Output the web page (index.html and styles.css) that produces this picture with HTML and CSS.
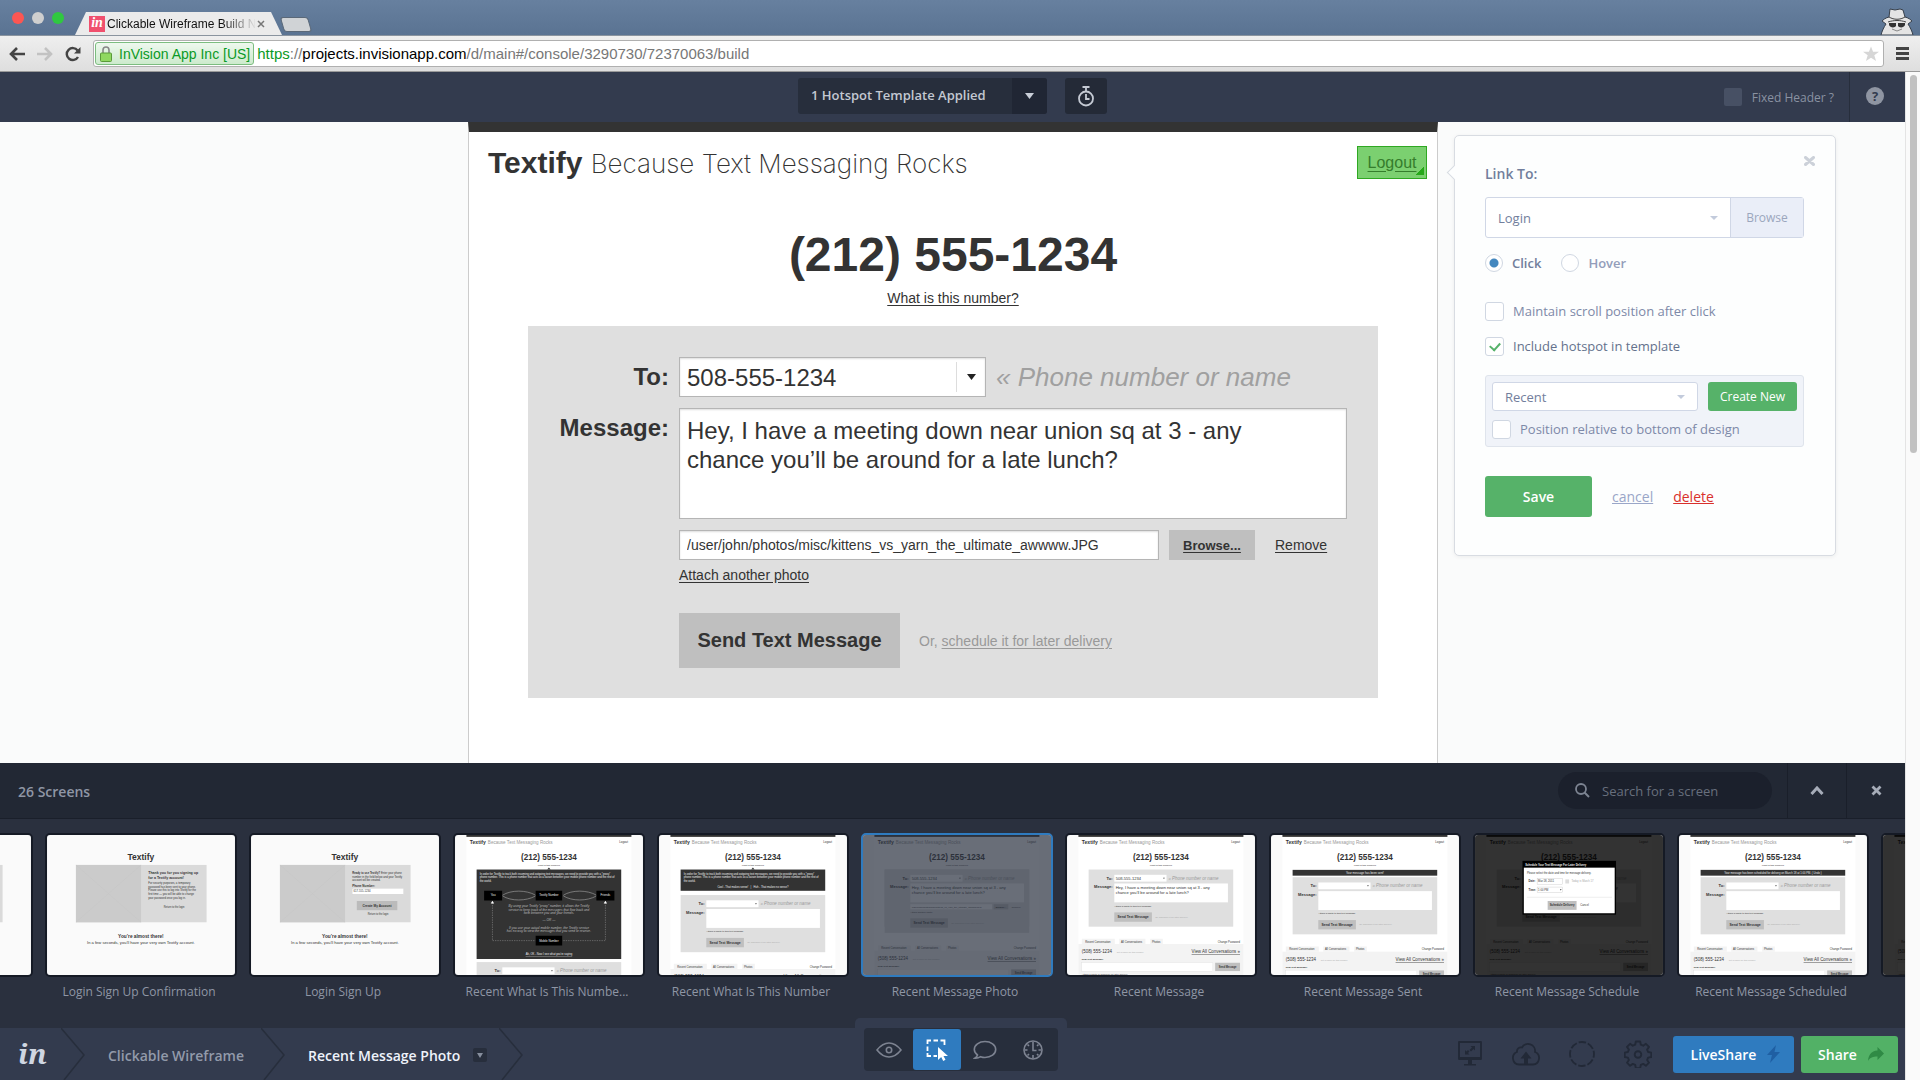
FILE: index.html
```html
<!DOCTYPE html>
<html lang="en">
<head>
  <meta charset="UTF-8" />
  <meta name="viewport" content="width=device-width, initial-scale=1" />
  <title>Clickable Wireframe Build</title>
  <link rel="stylesheet" href="styles.css">
</head>
<body>

  <!-- shared drawings for the screen thumbnails -->
  <svg class="defs" width="0" height="0" aria-hidden="true">
    <defs>
      <symbol id="t-top" viewBox="401 122 1105 823">
        <rect x="401" y="122" width="1105" height="823" fill="#fafafa"/>
        <rect x="468" y="122" width="970" height="823" fill="#fff"/>
        <rect x="468" y="122" width="970" height="11" fill="#333"/>
        <text x="488" y="174" class="t-b" font-size="30">Textify</text>
        <text x="594" y="174" class="t-l" font-size="27">Because Text Messaging Rocks</text>
        <text x="1418" y="168" class="t-r" font-size="17" text-anchor="end">Logout</text>
        <text x="953" y="271" class="t-b" font-size="48" text-anchor="middle">(212) 555-1234</text>
        <text x="953" y="303" class="t-r" font-size="14" text-anchor="middle">What is this number?</text>
      </symbol>
      <g id="t-fields">
        <rect x="528" y="325" width="850" height="336" fill="#dfdfdf"/>
        <text x="669" y="385" class="t-b" font-size="24" text-anchor="end">To:</text>
        <rect x="679" y="356" width="307" height="40" fill="#fff"/>
        <path d="M966 373h10l-5 7z" fill="#333"/>
        <text x="997" y="385" class="t-i" font-size="26">« Phone number or name</text>
        <text x="669" y="436" class="t-b" font-size="24" text-anchor="end">Message:</text>
        <rect x="679" y="407" width="668" height="111" fill="#fff"/>
      </g>
      <g id="t-send">
        <text x="679" y="544" class="t-r" font-size="14">Attach a photo to this text message</text>
        <rect x="679" y="577" width="221" height="55" fill="#bfbfbf"/>
        <text x="698" y="612" class="t-b" font-size="20">Send Text Message</text>
        <text x="919" y="609" class="t-g" font-size="14">Or, schedule it for later delivery</text>
      </g>
      <g id="t-filled">
        <text x="687" y="385" class="t-r" font-size="24">508-555-1234</text>
        <text x="687" y="438" class="t-r" font-size="24">Hey, I have a meeting down near union sq at 3 - any</text>
        <text x="687" y="466" class="t-r" font-size="24">chance you’ll be around for a late lunch?</text>
      </g>
      <g id="t-tabs">
        <path d="M488 732h194v31h-194zM708 732h154v31h-154zM890 732h74v31h-74z" fill="#f3f3f3"/>
        <rect x="468" y="763" width="970" height="260" fill="#f3f3f3"/>
        <text x="508" y="755" class="t-r" font-size="16">Recent Conversation</text>
        <text x="718" y="755" class="t-r" font-size="16">All Conversations</text>
        <text x="900" y="755" class="t-r" font-size="16">Photos</text>
        <text x="1418" y="755" class="t-r" font-size="16" text-anchor="end">Change Password</text>
        <text x="488" y="818" class="t-r" font-size="26">(508) 555-1234</text>
        <text x="694" y="816" class="t-g" font-size="13">Set a name for this number</text>
        <text x="1418" y="818" class="t-r" font-size="26" text-anchor="end" text-decoration="underline">View All Conversations »</text>
        <text x="488" y="858" class="t-b" font-size="14">New Text Message:</text>
        <rect x="488" y="873" width="770" height="49" fill="#fff" stroke="#ccc"/>
        <rect x="1272" y="873" width="146" height="49" fill="#bfbfbf"/>
        <text x="1345" y="903" class="t-b" font-size="15" text-anchor="middle">Send Message</text>
        <text x="488" y="944" class="t-r" font-size="14">Attach a photo or schedule for later delivery</text>
      </g>
      <g id="t-note">
        <path d="M943 325l10-12 10 12z" fill="#333"/>
        <text x="546" y="357" class="t-w" font-size="16">In order for Textify to track both incoming and outgoing text messages, we need to provide you with a “proxy”</text>
        <text x="546" y="377" class="t-w" font-size="16">phone number. This is a phone number that acts as a liaison between your mobile phone number and the rest of</text>
        <text x="546" y="397" class="t-w" font-size="16">the world.</text>
      </g>
      <symbol id="t-login" viewBox="0 0 1105 823">
        <rect width="1105" height="823" fill="#fafafa"/>
        <text x="552" y="147" class="t-b" font-size="50" text-anchor="middle">Textify</text>
        <rect x="170" y="176" width="768" height="337" fill="#dadada"/>
        <rect x="170" y="176" width="383" height="337" fill="#cbcbcb"/>
        <path d="M170 176l383 337M553 176l-383 337" stroke="#c5c5c5" stroke-width="3"/>
        <text x="552" y="605" class="t-b" font-size="28" text-anchor="middle">You’re almost there!</text>
        <text x="552" y="643" class="t-r" font-size="24" text-anchor="middle">In a few seconds, you’ll have your very own Textify account.</text>
      </symbol>
    </defs>
  </svg>

  <div class="titlebar">
    <div class="lights"><span class="red"></span><span class="grey"></span><span class="green"></span></div>
    <div class="tab">
      <span class="favicon">in</span>
      <span class="tab-title">Clickable Wireframe Build N</span>
      <button class="tab-close" aria-label="Close tab"><svg width="8" height="8" viewBox="0 0 8 8"><path d="M1 1l6 6M7 1L1 7" stroke="#777" stroke-width="1.5"/></svg></button>
    </div>
    <span class="new-tab"></span>
    <svg class="incognito" width="34" height="28" viewBox="0 0 34 28">
      <path d="M10 2l5 1 5-1 3 1 2 7c4 1 6 3 7 4l-4 3c2 3 4 7 5 11H1c1-4 3-8 5-11l-4-3c1-1 3-3 7-4z" fill="#e4e4e4" stroke="#37404c"/>
      <path d="M9 10c5 3 11 3 16 0M8 15c6-2 12-2 18 0" stroke="#444" fill="none"/>
      <path d="M9 16h7v3c-1 2-6 2-7-1zM18 16h7v2c-1 3-6 3-7 1z" fill="#333"/>
      <path d="M12 22l5 2 5-2" stroke="#888" fill="none"/>
    </svg>
  </div>

  <div class="toolbar">
    <button class="nav" aria-label="Back"><svg width="16" height="14" viewBox="0 0 16 14"><path d="M8 1L2 7l6 6M2 7h14" fill="none" stroke="#444" stroke-width="2.6"/></svg></button>
    <button class="nav" aria-label="Forward"><svg width="16" height="14" viewBox="0 0 16 14"><path d="M8 1l6 6-6 6M14 7H0" fill="none" stroke="#c2c2c2" stroke-width="2.6"/></svg></button>
    <button class="nav" aria-label="Reload"><svg width="16" height="16" viewBox="0 0 16 16"><path d="M13 11a6 6 0 1 1-.4-6.5" fill="none" stroke="#444" stroke-width="2.4"/><path d="M15.500 1v6.500H9z" fill="#444"/></svg></button>
    <div class="omnibox">
      <span class="cert">
        <svg width="12" height="16" viewBox="0 0 12 16"><path d="M3 8V4a3 3 0 0 1 6 0v4" fill="none" stroke="#888" stroke-width="1.6"/><rect x=".5" y="7" width="11" height="8.500" rx="1" fill="#8fd860" stroke="#5a9a3a"/></svg>
        InVision App Inc [US]
      </span>
      <span class="url"><span class="scheme">https</span>://<b>projects.invisionapp.com</b>/d/main#/console/3290730/72370063/build</span>
      <svg class="star" width="16" height="16" viewBox="0 0 18 17"><path d="M9 0l2.300 6H18l-5.300 4 2 6.500L9 12.600 3.300 16.500l2-6.500L0 6h6.700z" fill="#d6d6d6"/></svg>
    </div>
    <button class="menu" aria-label="Menu"><svg width="14" height="13" viewBox="0 0 14 13"><path d="M0 1.500h13M0 6.500h13M0 11.500h13" stroke="#444" stroke-width="3"/></svg></button>
  </div>

  <div class="viewport">
    <div class="app">

      <header class="app-header">
        <div class="header-side"></div>
        <div class="header-center">
          <button class="template">
            <span class="template-name">1 Hotspot Template Applied</span>
            <span class="template-arrow"><svg width="9" height="6" viewBox="0 0 9 6"><path d="M0 0h9L4.500 6z" fill="#c9ced8"/></svg></span>
          </button>
          <button class="timer" aria-label="Timer">
            <svg width="18" height="21" viewBox="0 0 18 21"><g fill="none" stroke="#c5cad4" stroke-width="1.8"><circle cx="9" cy="12.500" r="7"/><path d="M5.500 1h7M9 1v4M9 8v5h3.500"/></g></svg>
          </button>
        </div>
        <div class="header-side header-right">
          <label class="fixed"><input type="checkbox"> Fixed Header ?</label>
          <button class="help" aria-label="Help"><span>?</span></button>
        </div>
      </header>

      <main class="canvas">
        <section class="mock">
          <div class="mock-brand">
            <h1>Textify <span>Because Text Messaging Rocks</span></h1>
            <a class="logout" href="#">Logout</a>
          </div>
          <h2>(212) 555-1234</h2>
          <a class="what" href="#">What is this number?</a>

          <form class="message-form">
            <label class="form-label" for="to">To:</label>
            <div class="to-row">
              <div class="combo">
                <input type="text" id="to" value="508-555-1234">
                <span class="combo-arrow"><svg width="9" height="6" viewBox="0 0 9 6"><path d="M0 0h9L4.500 6z" fill="#222"/></svg></span>
              </div>
              <em>« Phone number or name</em>
            </div>
            <label class="form-label" for="message">Message:</label>
            <div class="message-col">
              <textarea id="message">Hey, I have a meeting down near union sq at 3 - any
chance you’ll be around for a late lunch?</textarea>
              <div class="file-row">
                <input type="text" aria-label="Photo path" value="/user/john/photos/misc/kittens_vs_yarn_the_ultimate_awwww.JPG">
                <button type="button" class="browse-file">Browse...</button>
                <a href="#">Remove</a>
              </div>
              <a class="attach" href="#">Attach another photo</a>
              <div class="send-row">
                <button type="button" class="send">Send Text Message</button>
                <span>Or, <a href="#">schedule it for later delivery</a></span>
              </div>
            </div>
          </form>
        </section>

        <aside class="panel">
          <button class="panel-close" aria-label="Close"><svg width="11" height="10" viewBox="0 0 11 10"><path d="M1.500 1.500l8 7M9.500 1.500l-8 7" stroke="#ccd1d9" stroke-width="3" stroke-linecap="round"/></svg></button>
          <label class="panel-title" for="link">Link To:</label>
          <div class="link-row">
            <span class="select"><select id="link"><option>Login</option></select></span>
            <button class="browse">Browse</button>
          </div>
          <div class="radios">
            <label class="on"><input type="radio" name="trigger" checked> Click</label>
            <label><input type="radio" name="trigger"> Hover</label>
          </div>
          <label class="check"><input type="checkbox"> Maintain scroll position after click</label>
          <label class="check on"><input type="checkbox" checked> Include hotspot in template</label>
          <div class="template-box">
            <div class="template-row">
              <span class="select"><select aria-label="Template"><option>Recent</option></select></span>
              <button class="create">Create New</button>
            </div>
            <label class="check"><input type="checkbox"> Position relative to bottom of design</label>
          </div>
          <div class="actions">
            <button class="save">Save</button>
            <a class="cancel" href="#">cancel</a>
            <a class="delete" href="#">delete</a>
          </div>
        </aside>
      </main>

      <section class="drawer">
        <div class="drawer-head">
          <h3>26 Screens</h3>
          <label class="search">
            <svg width="15" height="15" viewBox="0 0 15 15"><circle cx="6" cy="6" r="5" fill="none" stroke="#7d8492" stroke-width="1.8"/><path d="M9.500 9.500l4.500 4.500" stroke="#7d8492" stroke-width="2"/></svg>
            <input type="text" placeholder="Search for a screen" aria-label="Search for a screen">
          </label>
          <button class="head-btn" aria-label="Expand"><svg width="14" height="9" viewBox="0 0 14 9"><path d="M1.500 8L7 2l5.500 6" fill="none" stroke="#a6acb8" stroke-width="3"/></svg></button>
          <button class="head-btn" aria-label="Close drawer"><svg width="11" height="11" viewBox="0 0 11 11"><path d="M1.500 1.500l8 8M9.500 1.500l-8 8" stroke="#a6acb8" stroke-width="2.800"/></svg></button>
        </div>

        <div class="strip">
          <figure class="card">
            <svg viewBox="0 0 1105 823"><use href="#t-login"/></svg>
            <figcaption></figcaption>
          </figure>
          <figure class="card">
            <svg viewBox="0 0 1105 823">
              <use href="#t-login"/>
              <text x="595" y="230" class="t-b" font-size="21">Thank you for you signing up</text>
              <text x="595" y="257" class="t-b" font-size="21">for a Textify account!</text>
              <text x="595" y="290" class="t-r" font-size="16">For security purposes, a temporary</text>
              <text x="595" y="311" class="t-r" font-size="16">password has been sent to your phone.</text>
              <text x="595" y="332" class="t-r" font-size="16">Please use this to log into Textify for the</text>
              <text x="595" y="353" class="t-r" font-size="16">first time — you will be able to change</text>
              <text x="595" y="374" class="t-r" font-size="16">your password once you log in.</text>
              <text x="747" y="427" class="t-r" font-size="15" text-anchor="middle">Return to the login</text>
            </svg>
            <figcaption>Login Sign Up Confirmation</figcaption>
          </figure>
          <figure class="card">
            <svg viewBox="0 0 1105 823">
              <use href="#t-login"/>
              <text x="595" y="230" class="t-r" font-size="16"><tspan font-weight="bold">Ready to use Textify?</tspan> Enter your phone</text>
              <text x="595" y="250" class="t-r" font-size="16">number in the field below and your Textify</text>
              <text x="595" y="270" class="t-r" font-size="16">account will be created.</text>
              <text x="595" y="303" class="t-b" font-size="18">Phone Number:</text>
              <rect x="595" y="314" width="302" height="34" fill="#fff" stroke="#bbb"/>
              <text x="603" y="337" class="t-r" font-size="16">617-555-1234</text>
              <rect x="622" y="388" width="238" height="54" fill="#bbb"/>
              <text x="741" y="422" class="t-b" font-size="19" text-anchor="middle">Create My Account</text>
              <text x="747" y="470" class="t-r" font-size="15" text-anchor="middle">Return to the login</text>
            </svg>
            <figcaption>Login Sign Up</figcaption>
          </figure>
          <figure class="card">
            <svg viewBox="401 122 1105 823">
              <use href="#t-top" x="401" y="122" width="1105" height="823"/>
              <rect x="528" y="325" width="850" height="526" fill="#333"/>
              <use href="#t-note"/>
              <g fill="none" stroke="#999" stroke-width="4">
                <path d="M680 476c50-32 140-32 195 0M680 480c50 32 140 32 195 0M1038 476c50-32 140-32 195 0M1038 480c50 32 140 32 195 0"/>
                <path d="M621 520v223h254M1285 520v223h-254" stroke-width="3" stroke-dasharray="8 6"/>
              </g>
              <path d="M611 524l10-16 10 16zM1275 524l10-16 10 16z" fill="#fff"/>
              <path d="M572 449h106v58h-106zM875 449h156v58h-156zM1232 449h106v58h-106zM875 714h156v58h-156z"/>
              <text x="625" y="483" class="t-w" font-size="17" text-anchor="middle">You</text>
              <text x="953" y="483" class="t-w" font-size="17" text-anchor="middle">Textify Number</text>
              <text x="1285" y="483" class="t-w" font-size="17" text-anchor="middle">Friends</text>
              <text x="953" y="749" class="t-w" font-size="17" text-anchor="middle">Mobile Number</text>
              <g class="t-wi" font-size="19" text-anchor="middle">
                <text x="953" y="548">By using your Textify “proxy” number, it allows the Textify</text>
                <text x="953" y="568">service to keep track of the messages that flow back and</text>
                <text x="953" y="588">forth between you and your friends.</text>
                <text x="953" y="630">— OR —</text>
                <text x="953" y="674">If you use your actual mobile number, the Textify service</text>
                <text x="953" y="694">has no way to view the messages that you send or receive.</text>
              </g>
              <text x="953" y="828" class="t-w" font-size="16" text-anchor="middle" text-decoration="underline">Ah, OK - Now I see what you’re saying</text>
              <use href="#t-fields" y="544"/>
            </svg>
            <figcaption>Recent What Is This Numbe...</figcaption>
          </figure>
          <figure class="card">
            <svg viewBox="401 122 1105 823">
              <use href="#t-top" x="401" y="122" width="1105" height="823"/>
              <rect x="528" y="325" width="850" height="125" fill="#333"/>
              <use href="#t-note"/>
              <text x="953" y="432" class="t-w" font-size="16" text-anchor="middle">Cool - That makes sense!  &#160; | &#160;  Huh - That makes no sense?</text>
              <use href="#t-fields" y="150"/>
              <use href="#t-send" y="150"/>
              <use href="#t-tabs" y="147"/>
            </svg>
            <figcaption>Recent What Is This Number</figcaption>
          </figure>
          <figure class="card selected">
            <svg viewBox="401 122 1105 823">
              <use href="#t-top" x="401" y="122" width="1105" height="823"/>
              <rect x="528" y="325" width="850" height="372" fill="#dfdfdf"/>
              <use href="#t-fields"/>
              <use href="#t-filled"/>
              <rect x="679" y="529" width="480" height="30" fill="#fff"/>
              <text x="687" y="549" class="t-r" font-size="14">/user/john/photos/misc/kittens_vs_yarn_the_ultimate_awwww.JPG</text>
              <rect x="1169" y="529" width="86" height="30" fill="#bfbfbf"/>
              <text x="1212" y="549" class="t-b" font-size="14" text-anchor="middle">Browse...</text>
              <text x="1275" y="549" class="t-r" font-size="14">Remove</text>
              <text x="679" y="579" class="t-r" font-size="14">Attach another photo</text>
              <rect x="679" y="612" width="221" height="55" fill="#bfbfbf"/>
              <text x="698" y="647" class="t-b" font-size="20">Send Text Message</text>
              <text x="919" y="644" class="t-g" font-size="14">Or, schedule it for later delivery</text>
              <use href="#t-tabs" y="39"/>
              <rect x="401" y="122" width="1105" height="823" fill="#2a303e" opacity=".7"/>
            </svg>
            <figcaption>Recent Message Photo</figcaption>
          </figure>
          <figure class="card">
            <svg viewBox="401 122 1105 823">
              <use href="#t-top" x="401" y="122" width="1105" height="823"/>
              <use href="#t-fields"/><use href="#t-filled"/><use href="#t-send"/><use href="#t-tabs"/>
            </svg>
            <figcaption>Recent Message</figcaption>
          </figure>
          <figure class="card">
            <svg viewBox="401 122 1105 823">
              <use href="#t-top" x="401" y="122" width="1105" height="823"/>
              <rect x="528" y="327" width="850" height="34" fill="#333"/>
              <text x="953" y="350" class="t-w" font-size="17" text-anchor="middle">Your message has been sent!</text>
              <use href="#t-fields" y="45"/><use href="#t-send" y="45"/><use href="#t-tabs" y="45"/>
            </svg>
            <figcaption>Recent Message Sent</figcaption>
          </figure>
          <figure class="card">
            <svg viewBox="401 122 1105 823">
              <use href="#t-top" x="401" y="122" width="1105" height="823"/>
              <use href="#t-fields"/><use href="#t-filled"/><use href="#t-send"/><use href="#t-tabs"/>
              <rect x="401" y="122" width="1105" height="823" opacity=".8"/>
              <rect x="680" y="274" width="550" height="316"/>
              <rect x="688" y="314" width="534" height="268" fill="#fff"/>
              <text x="696" y="302" class="t-w" font-size="16" font-weight="bold">Schedule Your Text Message For Later Delivery</text>
              <text x="706" y="350" class="t-r" font-size="16">Please select the date and time for message delivery.</text>
              <text x="716" y="400" class="t-b" font-size="16">Date:</text>
              <rect x="766" y="379" width="150" height="32" fill="#fff" stroke="#bbb" stroke-width="2"/>
              <text x="772" y="401" class="t-r" font-size="16">Mar 18, 2011</text>
              <rect x="932" y="383" width="22" height="24" fill="#ddd"/>
              <text x="968" y="401" class="t-g" font-size="16">Today is March 17</text>
              <text x="716" y="449" class="t-b" font-size="16">Time:</text>
              <rect x="766" y="428" width="150" height="32" fill="#fff" stroke="#bbb" stroke-width="2"/>
              <text x="772" y="450" class="t-r" font-size="16">1:00 PM</text>
              <path d="M900 441h10l-5 7z" fill="#333"/>
              <path d="M706 488h500" stroke="#ddd" stroke-width="3"/>
              <rect x="828" y="510" width="170" height="52" fill="#bfbfbf"/>
              <text x="913" y="542" class="t-b" font-size="17" text-anchor="middle">Schedule Delivery</text>
              <text x="1020" y="542" class="t-r" font-size="16">Cancel</text>
            </svg>
            <figcaption>Recent Message Schedule</figcaption>
          </figure>
          <figure class="card">
            <svg viewBox="401 122 1105 823">
              <use href="#t-top" x="401" y="122" width="1105" height="823"/>
              <rect x="528" y="327" width="850" height="34" fill="#333"/>
              <text x="953" y="350" class="t-w" font-size="16" text-anchor="middle">Your message has been scheduled for delivery on March 18 at 1:00 PM. ( Undo )</text>
              <use href="#t-fields" y="45"/><use href="#t-send" y="45"/><use href="#t-tabs" y="45"/>
            </svg>
            <figcaption>Recent Message Scheduled</figcaption>
          </figure>
          <figure class="card">
            <svg viewBox="401 122 1105 823">
              <use href="#t-top" x="401" y="122" width="1105" height="823"/>
              <use href="#t-fields"/><use href="#t-send"/><use href="#t-tabs"/>
              <rect x="401" y="122" width="1105" height="823" opacity=".8"/>
            </svg>
            <figcaption></figcaption>
          </figure>
        </div>
      </section>

      <footer class="app-footer">
        <nav class="crumbs">
          <a class="logo" href="#">in</a>
          <svg class="chev" width="24" height="52" viewBox="0 0 24 52"><path d="M0 0l23 27-20 25" fill="none" stroke="#272e3c" stroke-width="1.500"/></svg>
          <a class="crumb" href="#">Clickable Wireframe</a>
          <svg class="chev" width="24" height="52" viewBox="0 0 24 52"><path d="M0 0l23 27-20 25" fill="none" stroke="#272e3c" stroke-width="1.500"/></svg>
          <a class="crumb current" href="#">Recent Message Photo</a>
          <button class="crumb-menu" aria-label="Screens"><svg width="6" height="5" viewBox="0 0 6 5"><path d="M0 0h6L3 5z" fill="#868e9d"/></svg></button>
          <svg class="chev" width="24" height="52" viewBox="0 0 24 52"><path d="M0 0l23 27-20 25" fill="none" stroke="#272e3c" stroke-width="1.500"/></svg>
        </nav>

        <div class="modes">
          <div class="modes-inner">
            <button aria-label="Preview"><svg width="26" height="18" viewBox="0 0 26 18"><g fill="none" stroke="#7d8391" stroke-width="1.600"><path d="M1 9c4-5 8-7 12-7s8 2 12 7c-4 5-8 7-12 7S5 14 1 9z"/><circle cx="13" cy="9" r="2.700"/></g></svg></button>
            <button class="active" aria-label="Build"><svg width="22" height="22" viewBox="0 0 22 22"><path d="M1.500 5V1.500H5M7.500 1.500h4.500M14.500 1.500h4V6M1.500 7.500V12M1.500 14v3H5M7.500 17H11" fill="none" stroke="#fff" stroke-width="1.800"/><path d="M12 8v13l3.200-3 2 4 2.300-1.200-2-3.800H22z" fill="#fff"/></svg></button>
            <button aria-label="Comment"><svg width="24" height="20" viewBox="0 0 24 20"><path d="M4.500 15C2.500 13.500 1.300 11.500 1.300 9.500c0-4.500 4.800-8 10.700-8s10.700 3.500 10.700 8-4.800 8-10.700 8c-1.600 0-3-.3-4.400-.8C6 17.800 4 18.400 1.800 18.200 3.300 17.300 4.200 16.300 4.500 15z" fill="none" stroke="#7d8391" stroke-width="1.600"/></svg></button>
            <button aria-label="History"><svg width="20" height="20" viewBox="0 0 20 20"><g fill="none" stroke="#7d8391" stroke-width="1.600"><circle cx="10" cy="10" r="9"/><path d="M10 2v8.500h3.500M10 15v3.500M2 10h2.500M15.500 10H18M4.500 4.500L6 6M15.500 4.500L14 6M4.500 15.500L6 14M15.500 15.500L14 14"/></g></svg></button>
          </div>
        </div>

        <div class="tools">
          <button aria-label="Present"><svg width="24" height="26" viewBox="0 0 24 26"><path d="M1 1h22v17H1z" fill="none" stroke="#222937" stroke-width="1.800" stroke-linejoin="round"/><path d="M1 16h22v3H1zM10 19h4v4h4v1.500H6V23h4zM12.500 5H17v4.500l-1.500-1.500-2.500 2.500-1.500-1.500L14 6.500zM11.500 13.500H7V9l1.500 1.500L10 9l1.500 1.500-1.500 1.500z" fill="#222937"/></svg></button>
          <button aria-label="Upload"><svg width="30" height="26" viewBox="0 0 30 26"><path d="M8 23.500a6.500 6.500 0 0 1-2-12.500 4 4 0 0 1 5-4.500 7 7 0 0 1 13 4.500A6.500 6.500 0 0 1 22 23.500z" fill="none" stroke="#222937" stroke-width="1.800"/><path d="M15 10.500l5.500 7H17v6h-4v-6H9.500z" fill="#222937"/></svg></button>
          <button aria-label="Status"><svg width="26" height="26" viewBox="0 0 26 26"><circle cx="13" cy="13" r="12" fill="none" stroke="#222937" stroke-width="1.800" stroke-dasharray="7.400 2.020" stroke-dashoffset="3.700"/></svg></button>
          <button aria-label="Settings"><svg width="28" height="28" viewBox="0 0 28 28"><g fill="none" stroke="#222937" stroke-width="1.900" stroke-linejoin="round"><path d="M11.800 1.500h4.400l.6 3.200 2.400 1 2.700-1.900 3.100 3.100-1.900 2.700 1 2.400 3.200.6v4.400l-3.200.6-1 2.400 1.900 2.700-3.100 3.100-2.700-1.900-2.400 1-.6 3.200h-4.400l-.6-3.200-2.400-1-2.700 1.900L3 22.700 4.900 20l-1-2.400-3.200-.6v-4.400l3.200-.6 1-2.400L3 6.900l3.100-3.100 2.700 1.900 2.400-1z"/><circle cx="14" cy="14.500" r="3.300"/></g></svg></button>
          <button class="liveshare">LiveShare <svg width="13" height="18" viewBox="0 0 13 18"><path d="M9 0L0 10h5L3 18l10-11H7.500z" fill="#1f5fa3"/></svg></button>
          <button class="share">Share <svg width="16" height="14" viewBox="0 0 16 14"><path d="M16 6.500L9.500 0v3.500C3 4 .5 8 0 14c2-3.500 5-4.500 9.500-4.500V13z" fill="#2f8a45"/></svg></button>
        </div>
      </footer>
    </div>
    <div class="scrollbar"><span></span></div>
  </div>
</body>
</html>
```

FILE: styles.css
```css
* {
  box-sizing: border-box;
}

body {
  margin: 0;
  height: 100vh;
  display: flex;
  flex-direction: column;
  overflow: hidden;
  font-family: "Open Sans", "Noto Sans", sans-serif;
  font-size: 13px;
  background: #fafafa;
}

button {
  border: none;
  padding: 0;
  background: none;
  font-family: inherit;
  cursor: pointer;
  display: flex;
  align-items: center;
  justify-content: center;
}

h1, h2, h3, figure {
  margin: 0;
}

a {
  color: inherit;
}

.defs {
  position: absolute;
}

/* browser window */
.titlebar {
  display: flex;
  align-items: flex-end;
  height: 36px;
  flex: none;
  padding: 0 6px 0 12px;
  background: linear-gradient(#67809f, #5a7392);
  border-bottom: 1px solid #8a949f;
}

.lights {
  display: flex;
  gap: 8px;
  align-self: center;
  margin-right: 11px;
}

.lights span {
  width: 12px;
  height: 12px;
  border-radius: 50%;
}

.lights .red {
  background: #fc5652;
}

.lights .grey {
  background: #cfcfcf;
}

.lights .green {
  background: #30c840;
}

.tab {
  display: flex;
  align-items: center;
  width: 207px;
  height: 23px;
  padding: 0 15px 0 14px;
  background: #ebebeb;
  clip-path: polygon(11px 0, calc(100% - 11px) 0, 100% 100%, 0 100%);
  font-family: "Liberation Sans", Arial, sans-serif;
}

.favicon {
  width: 16px;
  height: 16px;
  text-align: center;
  background: #f0506e;
  color: #fff;
  font: italic bold 14px/14px "Liberation Serif", serif;
  margin-right: 2px;
}

.tab-title {
  flex: 1;
  min-width: 0;
  font-size: 12px;
  white-space: nowrap;
  color: #111;
  mask-image: linear-gradient(to right, #000 115px, transparent 150px);
}

.tab-close {
  width: 12px;
}

.new-tab {
  width: 28px;
  height: 15px;
  margin: 0 0 3px 0;
  background: #d0d3d6;
  border: 1px solid #5a6878;
  border-radius: 3px;
  transform: skewX(16deg);
}

.incognito {
  margin-left: auto;
}

.toolbar {
  display: flex;
  align-items: center;
  height: 36px;
  flex: none;
  padding: 0 10px 0 9px;
  background: linear-gradient(#efefef, #dedede);
  border-bottom: 1px solid #9a9a9a;
}

.nav {
  width: 16px;
  margin-right: 12px;
}

.omnibox {
  flex: 1;
  display: flex;
  align-items: center;
  height: 27px;
  padding: 0 4px 0 1px;
  margin-right: 12px;
  background: #fff;
  border: 1px solid #b0b0b0;
  border-radius: 3px;
  font: 14px "Liberation Sans", Arial, sans-serif;
}

.cert {
  display: flex;
  align-items: center;
  gap: 7px;
  height: 23px;
  padding: 0 3px 0 4px;
  margin-right: 3px;
  border: 1px solid #7cbd80;
  border-radius: 3px;
  background: linear-gradient(#eef8ee, #cdeacd);
  color: #0b9a26;
}

.url {
  color: #777;
  font-size: 15px;
}

.url .scheme {
  color: #0b9a26;
}

.url b {
  color: #000;
  font-weight: normal;
}

.star {
  margin-left: auto;
}

.viewport {
  flex: 1;
  min-height: 0;
  display: flex;
}

.app {
  flex: 1;
  min-width: 0;
  display: flex;
  flex-direction: column;
}

.scrollbar {
  width: 15px;
  padding: 3px 3px 0 4px;
  background: #fafafa;
  border-left: 1px solid #e4e4e4;
}

.scrollbar span {
  display: block;
  height: 378px;
  border-radius: 4px;
  background: #c1c1c1;
}

/* top bar */
.app-header {
  display: flex;
  height: 50px;
  flex: none;
  background: #333b4e;
}

.header-side {
  flex: 1;
  display: flex;
  justify-content: flex-end;
}

.header-center {
  display: flex;
  align-items: center;
  gap: 18px;
  padding-bottom: 2px;
}

.template {
  height: 36px;
  border-radius: 3px;
  overflow: hidden;
  background: #272e3c;
  color: #c3c8d2;
  font-size: 13px;
  font-weight: 600;
}

.template-name {
  width: 214px;
  padding: 0 0 2px 13px;
  text-align: left;
}

.template-arrow {
  display: flex;
  align-items: center;
  justify-content: center;
  width: 35px;
  height: 36px;
  background: #202634;
}

.timer {
  width: 42px;
  height: 36px;
  border-radius: 3px;
  background: #242a37;
}

.fixed {
  display: flex;
  align-items: center;
  gap: 10px;
  padding-right: 15px;
  color: #8a92a2;
  font-size: 12px;
}

.fixed input {
  appearance: none;
  width: 18px;
  height: 18px;
  margin: 0;
  border-radius: 2px;
  background: #475064;
}

.help {
  width: 56px;
  border-left: 1px solid #272e3c;
}

.help span {
  width: 18px;
  height: 18px;
  margin: 0 5px 2px 0;
  border-radius: 50%;
  background: #8f95a2;
  color: #333b4e;
  font-size: 13px;
  font-weight: bold;
  line-height: 18px;
}

/* wireframe */
.canvas {
  flex: 1;
  min-height: 0;
  overflow: hidden;
  display: grid;
  grid-template-columns: 1fr 970px 1fr;
  padding-left: 1px;
  background: #fafbfb;
}

.mock {
  grid-column: 2;
  background: #fff;
  border: 1px solid #ccc;
  border-top: 10px solid #333;
  border-bottom: none;
  font-family: "Liberation Sans", Arial, sans-serif;
  color: #333;
  text-align: center;
}

.mock-brand {
  display: flex;
  justify-content: space-between;
  align-items: center;
  padding: 13px 10px 0 19px;
}

.mock-brand h1 {
  padding-top: 3px;
  font-size: 30px;
  line-height: 30px;
}

.mock-brand h1 span {
  font-family: Inter, "Liberation Sans", sans-serif;
  font-weight: 200;
  font-size: 26px;
}

.logout {
  width: 70px;
  height: 33px;
  line-height: 32px;
  border: 1px solid #2fa822;
  background: linear-gradient(135deg, transparent 50%, #26a81a 50%) right 2px bottom 3px / 8px 8px no-repeat #7bd070;
  color: #357d2c;
  font-size: 16px;
  text-underline-offset: 3px;
}

.mock h2 {
  margin-top: 48px;
  font-size: 48px;
  line-height: 56px;
}

.what {
  display: block;
  margin-top: 5px;
  font-size: 14px;
  line-height: 20px;
  text-underline-offset: 2px;
}

.message-form {
  display: grid;
  grid-template-columns: 141px 1fr;
  gap: 11px 10px;
  margin: 18px 59px 0;
  padding: 31px 31px 30px 0;
  background: #dfdfdf;
  text-align: left;
  font-size: 14px;
}

.message-form input,
.message-form textarea {
  display: block;
  border: 1px solid #b5b5b5;
  border-radius: 0;
  background: #fff;
  box-shadow: inset 0 1px 2px #ddd;
  color: #333;
  font-family: inherit;
  font-size: 24px;
  line-height: 29px;
  padding: 7px 7px 6px;
}

.form-label {
  text-align: right;
  font-size: 24px;
  font-weight: bold;
  line-height: 40px;
}

.to-row {
  display: flex;
  align-items: center;
  gap: 10px;
}

.to-row em {
  color: #a0a0a0;
  font-size: 26px;
}

.combo {
  position: relative;
  width: 307px;
}

.combo input {
  width: 100%;
  height: 40px;
}

.combo-arrow {
  position: absolute;
  top: 5px;
  right: 1px;
  width: 29px;
  height: 30px;
  display: flex;
  align-items: center;
  justify-content: center;
  border-left: 1px solid #ddd;
}

.message-form textarea {
  width: 100%;
  height: 111px;
  resize: none;
  overflow: hidden;
}

.file-row {
  display: flex;
  align-items: center;
  margin-top: 11px;
}

.file-row input {
  width: 480px;
  height: 30px;
  padding: 0 7px;
  font-size: 14px;
}

.browse-file {
  width: 86px;
  height: 30px;
  margin: 0 20px 0 10px;
  background: #bfbfbf;
  color: #333;
  font-size: 13px;
  font-weight: bold;
  text-decoration: underline;
  text-underline-offset: 2px;
}

.message-form a {
  text-underline-offset: 2px;
}

.attach {
  display: block;
  margin-top: 5px;
  line-height: 20px;
}

.send-row {
  display: flex;
  align-items: center;
  gap: 19px;
  margin-top: 28px;
  color: #999;
}

.send {
  width: 221px;
  height: 55px;
  background: #bfbfbf;
  color: #333;
  font-size: 20px;
  font-weight: bold;
}

/* hotspot panel */
.panel {
  position: relative;
  width: 382px;
  height: 421px;
  margin: 13px 0 0 16px;
  padding: 28px 31px 0 30px;
  background: #fdfefe;
  border: 1px solid #d8dce2;
  border-radius: 5px;
  box-shadow: 0 1px 4px rgba(0, 0, 0, 0.06);
  color: #7d89a8;
}

.panel::before {
  content: "";
  position: absolute;
  left: -6px;
  top: 31px;
  width: 10px;
  height: 10px;
  background: #fdfefe;
  border: 1px solid #d8dce2;
  border-width: 0 0 1px 1px;
  transform: rotate(45deg);
}

.panel-close {
  position: absolute;
  top: 20px;
  right: 20px;
}

.panel-title {
  display: block;
  font-size: 14px;
  font-weight: 600;
  line-height: 20px;
  color: #727e9c;
}

.link-row {
  display: flex;
  height: 41px;
  margin-top: 13px;
  border: 1px solid #d0d7e6;
  border-radius: 3px;
  background: #fff;
}

.select {
  position: relative;
  flex: 1;
  display: flex;
}

.select::after {
  content: "";
  position: absolute;
  right: 12px;
  top: 50%;
  margin-top: -2px;
  border: 4px solid transparent;
  border-top-color: #c3cbdc;
  border-bottom: none;
}

.select select {
  appearance: none;
  width: 100%;
  padding: 0 12px;
  border: none;
  background: none;
  color: #727e9c;
  font: 13px "Open Sans", sans-serif;
}

.browse {
  width: 73px;
  border-left: 1px solid #d0d7e6;
  background: #eaeef8;
  color: #9ba6bd;
  font-size: 12px;
}

.radios {
  display: flex;
  gap: 20px;
  margin: 15px 0 29px;
  font-weight: 600;
  line-height: 20px;
  color: #939dba;
}

.radios label,
.check {
  display: flex;
  align-items: center;
  gap: 9px;
}

.radios .on {
  color: #727e9c;
}

.panel input {
  appearance: none;
  width: 18px;
  height: 18px;
  margin: 0;
  border: 1px solid #d0d7e2;
  border-radius: 50%;
  background: #fff;
}

.panel input[type="radio"]:checked {
  background: radial-gradient(circle, #4488bf 4px, #fff 5px);
}

.check {
  margin-bottom: 16px;
  line-height: 19px;
}

.check.on {
  color: #64728c;
}

.panel .check input {
  width: 19px;
  height: 19px;
  border-radius: 3px;
  display: grid;
  place-items: center;
}

.panel .check input:checked::before {
  content: "";
  width: 8px;
  height: 5px;
  border: 2px solid #56b26a;
  border-width: 0 0 2px 2px;
  transform: rotate(-48deg);
  margin-bottom: 3px;
}

.template-box {
  margin-top: 19px;
  padding: 6px;
  border: 1px solid #dfe4ec;
  border-radius: 3px;
  background: #f0f3f9;
}

.template-row {
  display: flex;
  gap: 10px;
  margin-bottom: 9px;
}

.template-row .select {
  height: 29px;
  border: 1px solid #d0d7e6;
  border-radius: 3px;
  background: #fff;
}

.create {
  width: 89px;
  border-radius: 3px;
  background: #56b269;
  color: #fff;
  font-size: 12px;
}

.template-box .check {
  margin-bottom: 1px;
}

.actions {
  display: flex;
  align-items: center;
  gap: 20px;
  margin-top: 29px;
  font-size: 14px;
}

.save {
  width: 107px;
  height: 41px;
  border-radius: 3px;
  background: #56b269;
  color: #fff;
  font-size: 14px;
  font-weight: 600;
}

.cancel {
  color: #9aa6c8;
}

.delete {
  color: #d9302c;
}

/* screens drawer */
.drawer {
  flex: none;
  overflow: hidden;
  background: #2a303e;
  color: #8f96a5;
}

.drawer-head {
  display: flex;
  align-items: center;
  height: 56px;
  padding-left: 18px;
  background: #222834;
  border-bottom: 1px solid #1a1f2a;
}

.drawer-head h3 {
  margin-right: auto;
  padding-top: 2px;
  font-size: 14px;
  font-weight: 600;
}

.search {
  display: flex;
  align-items: center;
  gap: 12px;
  width: 214px;
  height: 37px;
  margin-right: 15px;
  padding: 0 17px;
  border-radius: 19px;
  background: #1b202c;
}

.search svg {
  flex: none;
}

.search input {
  width: 100%;
  padding: 0;
  border: none;
  background: none;
  color: #8f96a5;
  font: 13px "Open Sans", sans-serif;
}

.search input::placeholder {
  color: #686f7d;
}

.head-btn {
  width: 59px;
  height: 55px;
  border-left: 1px solid #1a1f2a;
}

.strip {
  display: flex;
  gap: 12px;
  height: 209px;
  margin-left: -159px;
  padding-top: 14px;
}

.card {
  flex: none;
  width: 192px;
}

.card svg {
  display: block;
  width: 192px;
  height: 144px;
  border: 2px solid #151a25;
  border-radius: 5px;
}

.card.selected svg {
  border-color: #2f7bbf;
}

.card figcaption {
  margin-top: 5px;
  padding-right: 4px;
  line-height: 20px;
  font-size: 12px;
  text-align: center;
  white-space: nowrap;
}

/* lettering inside the thumbnails */
.t-b, .t-r, .t-l, .t-i, .t-g, .t-w, .t-wi {
  font-family: "Liberation Sans", Arial, sans-serif;
  fill: #333;
}

.t-b {
  font-weight: bold;
}

.t-l {
  fill: #999;
}

.t-i {
  font-style: italic;
  fill: #999;
}

.t-g {
  fill: #aaa;
}

.t-w {
  fill: #eee;
}

.t-wi {
  font-style: italic;
  fill: #bbb;
}

.t-wi text {
  fill: #bbb;
}

/* bottom bar */
.app-footer {
  position: relative;
  display: flex;
  justify-content: space-between;
  height: 52px;
  flex: none;
  background: #333b4e;
}

.crumbs {
  display: flex;
  align-items: center;
  color: #929aaa;
  font-size: 14px;
  font-weight: 600;
}

.crumbs a {
  text-decoration: none;
}

.logo {
  width: 61px;
  padding: 0 0 2px 18px;
  color: #cfd6e2;
  font: italic bold 28px/36px "Noto Serif", "Liberation Serif", serif;
}

.crumb {
  margin: 0 17px 0 23px;
  padding-top: 2px;
}

.crumb.current {
  margin-right: 13px;
  color: #eef3fb;
}

.crumb-menu {
  width: 14px;
  height: 14px;
  margin: 2px 12px 0 0;
  border-radius: 2px;
  background: #272e3c;
}

.modes {
  position: absolute;
  left: calc(50% - 98px);
  top: -10px;
  height: 62px;
  padding: 10px 9px 0;
  border-radius: 5px 5px 0 0;
  background: #333b4e;
}

.modes-inner {
  display: flex;
  padding: 1px;
  border-radius: 4px;
  background: #272e3c;
}

.modes-inner button {
  width: 48px;
  height: 41px;
}

.modes-inner .active {
  border-radius: 3px;
  background: #2f7bbf;
}

.tools {
  display: flex;
  align-items: center;
  padding-right: 7px;
}

.tools button {
  width: 56px;
}

.tools .liveshare,
.tools .share {
  height: 37px;
  margin-left: 7px;
  gap: 11px;
  border-radius: 3px;
  background: #2f7bbf;
  color: #fff;
  font-size: 14px;
  font-weight: 600;
}

.tools .liveshare {
  width: 121px;
  padding-left: 4px;
}

.tools .share {
  width: 97px;
  padding-left: 3px;
  background: #52b166;
}
```
